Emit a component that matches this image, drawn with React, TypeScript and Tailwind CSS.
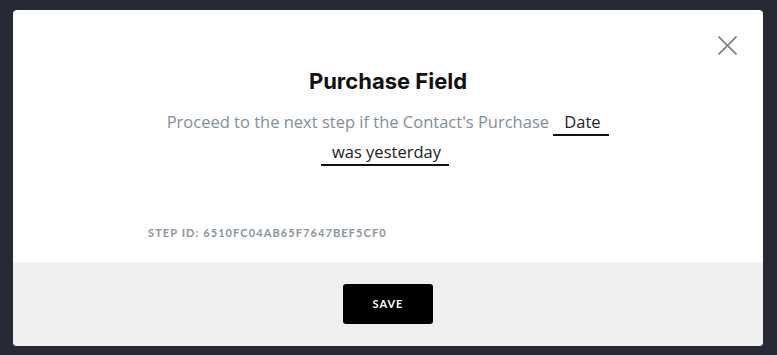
import React from "react";

export default function App() {
  return (
    <div className="w-[777px] h-[355px] bg-[#272935] pt-[10px] pl-[13px] overflow-hidden" style={{ fontFamily: '"Open Sans", sans-serif' }}>
      <div className="w-[750px] h-[336px] bg-white rounded-[4px] overflow-hidden flex flex-col">
        <div className="relative h-[252px] flex flex-col">
          <button className="absolute right-[26px] top-[26px] w-[19px] h-[19px]" aria-label="Close">
            <svg width="19" height="19" viewBox="0 0 19 19" fill="none" stroke="#7a7a7a" strokeWidth="1.6">
              <path d="M0.5 0.5 L18.5 18.5 M18.5 0.5 L0.5 18.5" />
            </svg>
          </button>
          <h1 className="mt-[58px] text-center text-[22px] leading-[27px] font-bold text-[#111]" style={{ fontFamily: 'Inter, sans-serif' }}>
            Purchase Field
          </h1>
          <p className="mt-[12px] mx-auto w-[480px] text-center text-[16.5px] leading-[30px] text-[#838d98]">
            Proceed to the next step if the Contact's Purchase{" "}
            <span className="inline-block w-[56px] pl-[11px] text-left text-[#222] border-b-2 border-[#111] leading-[24px] h-[26px]">Date</span>{" "}
            <span className="inline-block w-[128px] pl-[11px] text-left text-[#222] border-b-2 border-[#111] leading-[24px] h-[26px]">was yesterday</span>
            <span className="inline-block w-[6px]"></span>
          </p>
          <div className="mt-auto mb-[22px] pl-[135px] text-[11px] leading-[14px] font-bold tracking-[1.1px] text-[#8a949e]" style={{ fontFamily: 'Lato, sans-serif' }}>
            STEP ID: 6510FC04AB65F7647BEF5CF0
          </div>
        </div>
        <div className="flex-1 bg-[#efefef] flex items-start justify-center pt-[22px]">
          <button className="w-[90px] h-[40px] bg-black rounded-[3px] text-white text-[11px] font-bold tracking-[1px]" style={{ fontFamily: 'Lato, sans-serif' }}>
            SAVE
          </button>
        </div>
      </div>
    </div>
  );
}
